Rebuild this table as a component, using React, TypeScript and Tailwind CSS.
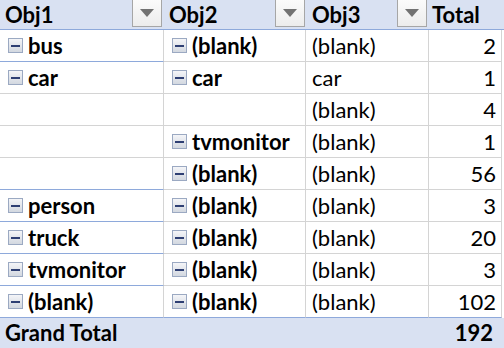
import React from 'react';

type Row = {
  a?: string;
  b?: string;
  c: string;
  n: number;
  groupEnd?: boolean;
};

const rows: Row[] = [
  { a: 'bus', b: '(blank)', c: '(blank)', n: 2, groupEnd: true },
  { a: 'car', b: 'car', c: 'car', n: 1 },
  { c: '(blank)', n: 4 },
  { b: 'tvmonitor', c: '(blank)', n: 1 },
  { b: '(blank)', c: '(blank)', n: 56, groupEnd: true },
  { a: 'person', b: '(blank)', c: '(blank)', n: 3, groupEnd: true },
  { a: 'truck', b: '(blank)', c: '(blank)', n: 20, groupEnd: true },
  { a: 'tvmonitor', b: '(blank)', c: '(blank)', n: 3, groupEnd: true },
  { a: '(blank)', b: '(blank)', c: '(blank)', n: 102 },
];

const MinusBox = () => (
  <span className="flex w-[15px] h-[15px] shrink-0 items-center justify-center border border-[#9ba9c2] bg-gradient-to-b from-[#f4f5f8] to-[#d3d8e0]">
    <span className="block w-[9px] h-[2px] bg-[#2e3f73]" />
  </span>
);

const Dropdown = () => (
  <div className="flex w-[30px] h-[27px] items-center justify-center border border-[#a6a6a6] border-t-0 bg-gradient-to-b from-[#fbfbfb] to-[#ececec]">
    <span className="block w-0 h-0 border-l-[7px] border-r-[7px] border-t-[8px] border-l-transparent border-r-transparent border-t-[#727272]" />
  </div>
);

const Label = ({ text }: { text?: string }) =>
  text ? (
    <div className="flex items-center gap-[5px] font-bold">
      <MinusBox />
      <span>{text}</span>
    </div>
  ) : null;

export default function App() {
  return (
    <div
      className="w-[504px] h-[348px] overflow-hidden bg-white text-[22px] leading-none text-black"
      style={{ fontFamily: 'Lato, "Open Sans", sans-serif' }}
    >
      {/* header */}
      <div className="flex h-[30px] bg-[#d9e1f2] border-b border-[#8ea9db] font-bold">
        <div className="flex w-[164px] items-start justify-between pl-[5px] pr-[2px]">
          <span className="leading-[29px]">Obj1</span>
          <Dropdown />
        </div>
        <div className="flex w-[142px] items-start justify-between pl-[5px] pr-[1px]">
          <span className="leading-[29px]">Obj2</span>
          <Dropdown />
        </div>
        <div className="flex w-[123px] items-start justify-between pl-[6px] pr-[2px]">
          <span className="leading-[29px]">Obj3</span>
          <Dropdown />
        </div>
        <div className="w-[73px] pl-[3px] leading-[29px]">Total</div>
      </div>

      {rows.map((r, i) => (
        <div key={i} className="flex h-[32px]">
          <div
            className={`flex w-[164px] items-center pl-[8px] border-r border-r-[#d4d4d4] border-b ${
              r.groupEnd || i === rows.length - 1 ? 'border-b-[#8ea9db]' : 'border-b-[#d4d4d4]'
            }`}
          >
            <Label text={r.a} />
          </div>
          <div
            className={`flex w-[142px] items-center pl-[8px] border-r border-r-[#d4d4d4] border-b ${
              i === rows.length - 1 ? 'border-b-[#8ea9db]' : 'border-b-[#d4d4d4]'
            }`}
          >
            <Label text={r.b} />
          </div>
          <div
            className={`flex w-[123px] items-center pl-[6px] border-r border-r-[#d4d4d4] border-b ${
              i === rows.length - 1 ? 'border-b-[#8ea9db]' : 'border-b-[#d4d4d4]'
            }`}
          >
            {r.c}
          </div>
          <div
            className={`flex w-[73px] items-center justify-end pr-[5px] border-r border-r-[#d4d4d4] border-b ${
              i === rows.length - 1 ? 'border-b-[#8ea9db]' : 'border-b-[#d4d4d4]'
            }`}
          >
            {r.n}
          </div>
        </div>
      ))}

      {/* grand total */}
      <div className="flex h-[30px] items-center bg-[#d9e1f2] font-bold">
        <div className="flex-1 pl-[5px]">Grand Total</div>
        <div className="w-[73px] pr-[8px] text-right">192</div>
        <div className="w-[3px]" />
      </div>
    </div>
  );
}
